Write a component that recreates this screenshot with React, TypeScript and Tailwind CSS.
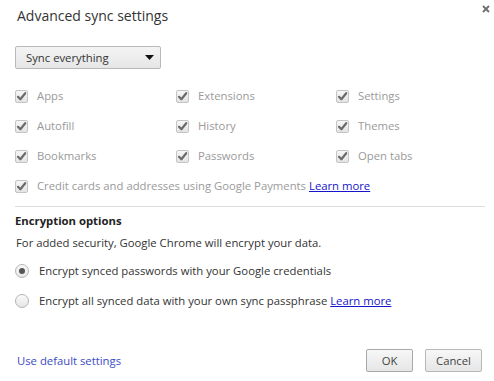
import React from "react";

function Check({ label }: { label: string }) {
  return (
    <div className="flex items-center h-[30px]">
      <span className="w-[13px] h-[13px] border border-[#c4c4c4] rounded-[2px] bg-gradient-to-b from-[#f6f6f6] to-[#e4e4e4] flex items-center justify-center">
        <svg width="11" height="11" viewBox="0 0 11 11">
          <path d="M2 5.8 L4.4 8.3 L9.2 2.2" fill="none" stroke="#6b6b6b" strokeWidth="2.2" strokeLinecap="round" strokeLinejoin="round" />
        </svg>
      </span>
      <span className="ml-[9px] text-[#9a9a9a]">{label}</span>
    </div>
  );
}

function Radio({ checked, children }: { checked?: boolean; children: React.ReactNode }) {
  return (
    <div className="flex items-center h-[30px]">
      <span className="w-[14px] h-[14px] rounded-full border border-[#b4b4b4] bg-gradient-to-b from-[#fafafa] to-[#e6e6e6] flex items-center justify-center">
        {checked && <span className="w-[6px] h-[6px] rounded-full bg-[#555]" />}
      </span>
      <span className="ml-[10px] text-[#333]">{children}</span>
    </div>
  );
}

export default function App() {
  return (
    <div
      className="relative w-[494px] h-[381px] bg-white text-[11.3px] leading-[16px] text-[#333]"
      style={{ fontFamily: '"Open Sans", "Noto Sans", sans-serif' }}
    >
      <button className="absolute right-[4px] top-[5px] w-[8px] h-[8px]">
        <svg width="8" height="8" viewBox="0 0 8 8">
          <path d="M1 1 L7 7 M7 1 L1 7" stroke="#6e6e6e" strokeWidth="1.8" />
        </svg>
      </button>

      <div className="pl-[17px] pt-[6px] text-[14px] leading-[20px] text-[#333]">Advanced sync settings</div>

      <div className="pl-[15px]">
        <div className="mt-[20px] w-[146px] h-[23px] border border-[#b9b9b9] rounded-[2px] bg-gradient-to-b from-[#f4f4f4] to-[#e6e6e6] flex items-center justify-between pl-[10px] pr-[6px] text-[#333]">
          <span>Sync everything</span>
          <svg width="9" height="5" viewBox="0 0 9 5">
            <path d="M0 0 H9 L4.5 5 Z" fill="#111" />
          </svg>
        </div>

        <div className="mt-[12px] grid grid-cols-[161px_160px_1fr]">
          <Check label="Apps" />
          <Check label="Extensions" />
          <Check label="Settings" />
          <Check label="Autofill" />
          <Check label="History" />
          <Check label="Themes" />
          <Check label="Bookmarks" />
          <Check label="Passwords" />
          <Check label="Open tabs" />
        </div>
        <div className="flex items-center h-[30px]">
          <span className="w-[13px] h-[13px] border border-[#c4c4c4] rounded-[2px] bg-gradient-to-b from-[#f6f6f6] to-[#e4e4e4] flex items-center justify-center">
            <svg width="11" height="11" viewBox="0 0 11 11">
              <path d="M2 5.8 L4.4 8.3 L9.2 2.2" fill="none" stroke="#6b6b6b" strokeWidth="2.2" strokeLinecap="round" strokeLinejoin="round" />
            </svg>
          </span>
          <span className="ml-[9px] text-[#9a9a9a]">Credit cards and addresses using Google Payments</span>
          <a href="#" className="ml-[3px] text-[#1515cc] underline">Learn more</a>
        </div>

        <div className="mt-[5px] w-[470px] border-t border-[#dcdcdc]" />

        <div className="mt-[6px] font-bold text-[#222]">Encryption options</div>
        <div className="mt-[6px] pl-[1px]">For added security, Google Chrome will encrypt your data.</div>

        <div className="mt-[5px]">
          <Radio checked>Encrypt synced passwords with your Google credentials</Radio>
          <Radio>
            Encrypt all synced data with your own sync passphrase{" "}
            <a href="#" className="text-[#1515cc] underline">Learn more</a>
          </Radio>
        </div>
      </div>

      <div className="mt-[33px] flex items-center pl-[17px] pr-[12px]">
        <a href="#" className="text-[#3b4bc4]">Use default settings</a>
        <div className="ml-auto flex gap-[12px]">
          <button className="w-[47px] h-[23px] border border-[#a8a8a8] rounded-[2px] bg-gradient-to-b from-[#f7f7f7] to-[#e6e6e6] text-[#444]">OK</button>
          <button className="w-[57px] h-[23px] border border-[#b8b8b8] rounded-[2px] bg-gradient-to-b from-[#f7f7f7] to-[#e6e6e6] text-[#444]">Cancel</button>
        </div>
      </div>
    </div>
  );
}
